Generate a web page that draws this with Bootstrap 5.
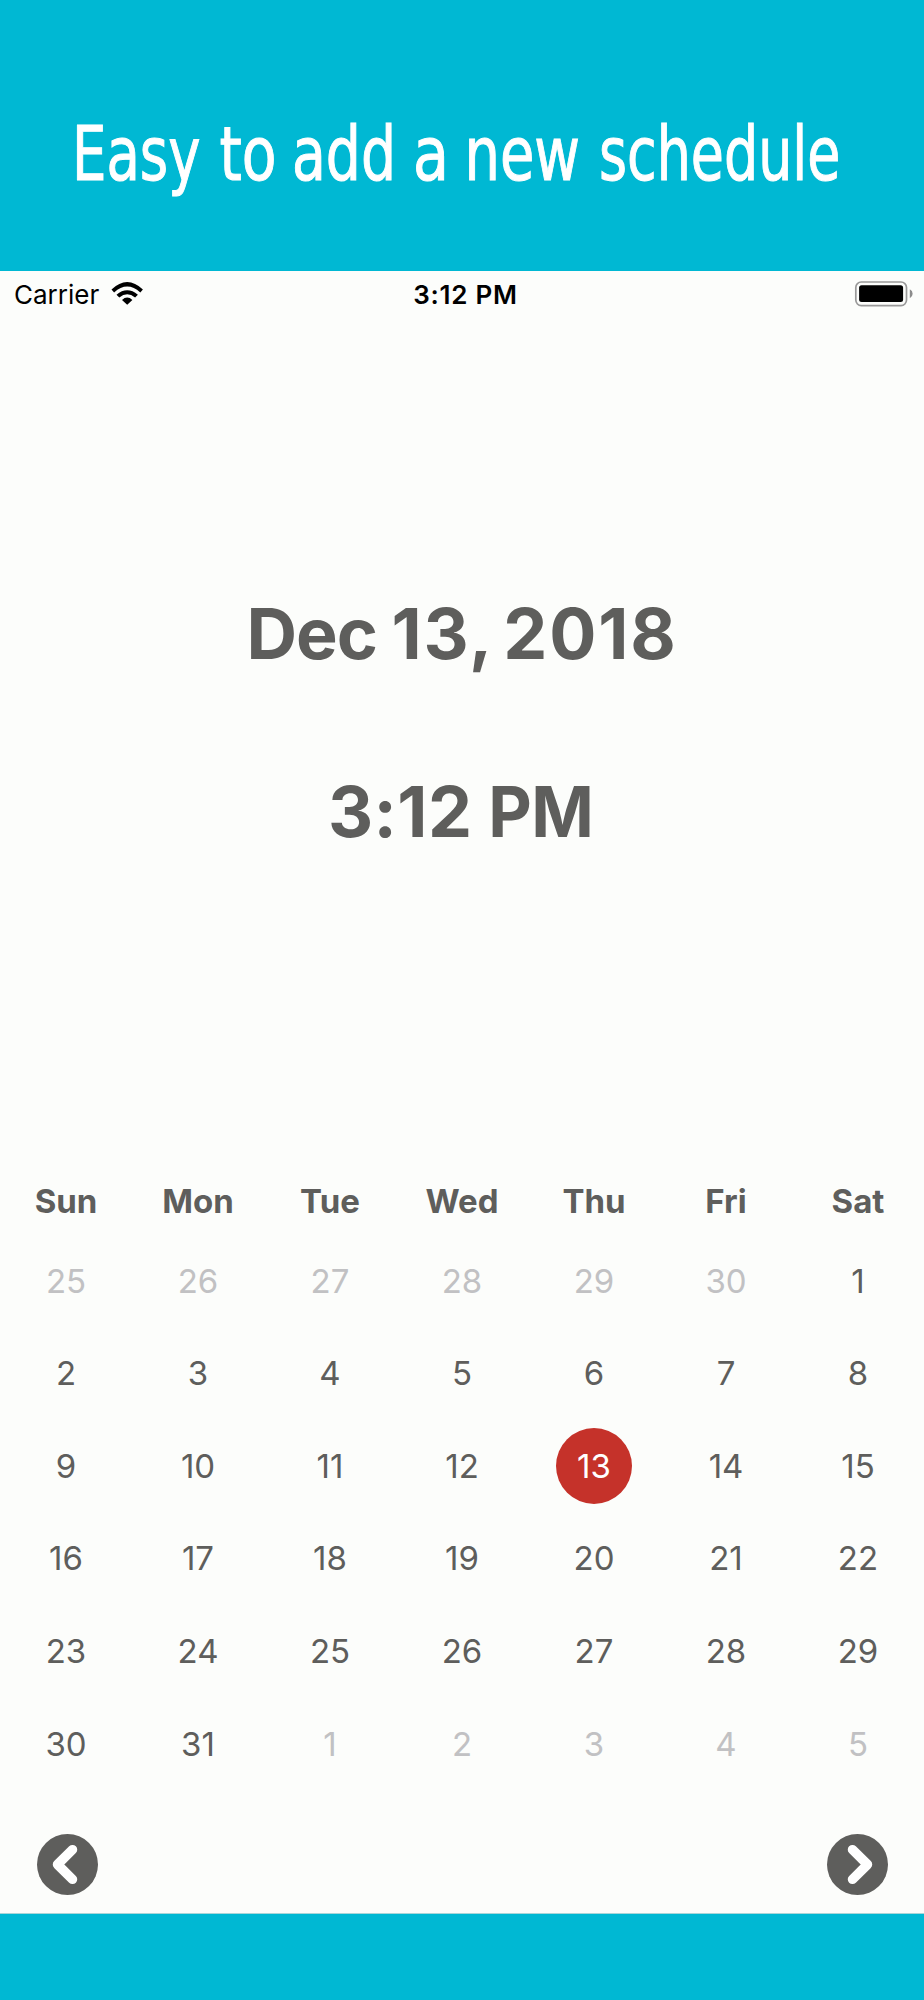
<!DOCTYPE html>
<html lang="en">
<head>
<meta charset="utf-8">
<meta name="viewport" content="width=device-width, initial-scale=1">
<title>Schedule</title>
<link href="https://cdn.jsdelivr.net/npm/bootstrap@5.3.0/dist/css/bootstrap.min.css" rel="stylesheet">
<style>
body{font-family:Inter,"Liberation Sans",sans-serif;background:#fcfdfb;color:#5e5e5c;height:2000px}
.promo{background:#00b8d3;height:271px}
.promo svg{display:block;overflow:visible}
.promo text{font-family:"DejaVu Sans Condensed","DejaVu Sans",sans-serif;font-size:74.5px;font-stretch:condensed;stroke:#fff;stroke-width:1px}
.status{height:46px;color:#000;font-size:26px;padding:0 11px 0 14px}
.status .clock{font-weight:600;letter-spacing:.75px;padding-left:4px}
.status>*{flex:1 1 0}
.status .battery{margin-right:-1.5px}
.picker{height:851px;font-size:70px;font-weight:700;line-height:84px;padding-top:275px;white-space:nowrap}
.digits{letter-spacing:1.8px;word-spacing:-7px}
.month{letter-spacing:-1px;margin-right:-2px}
.picker .time{margin-top:94px;letter-spacing:.4px;word-spacing:-3px}
.meridiem{display:inline-block;transform:scaleX(.96);transform-origin:center;letter-spacing:-.5px}
.calendar{font-size:33px}
.week{height:92.6px}
.week.names{height:67px;font-weight:700}
.other{color:#c1c1c3}
.today{width:76px;height:76px;background:#c5322a;color:#fff}
.pager{padding:43.5px 36.5px 18px}
.pager .btn{line-height:0}
.footer-bar{background:#00b8d3;flex:1;border-top:1px solid #a9d5d8}
</style>
</head>
<body class="d-flex flex-column m-0">
<header class="promo flex-shrink-0">
<svg width="924" height="271"><text y="180" fill="#fff"><tspan x="72" textLength="128.500" lengthAdjust="spacingAndGlyphs">Easy</tspan> <tspan x="219.500" textLength="57" lengthAdjust="spacingAndGlyphs">to</tspan> <tspan x="292" textLength="104" lengthAdjust="spacingAndGlyphs">add</tspan> <tspan x="413" textLength="36" lengthAdjust="spacingAndGlyphs">a</tspan> <tspan x="464.500" textLength="115.500" lengthAdjust="spacingAndGlyphs">new</tspan> <tspan x="599" textLength="241.500" lengthAdjust="spacingAndGlyphs">schedule</tspan></text></svg>
</header>
<div class="status d-flex align-items-center flex-shrink-0">
  <div class="d-flex align-items-center"><span class="carrier">Carrier</span>
    <svg class="ms-2" width="40" height="24" viewBox="-4.500 0 40 24"><path d="M0 7.500Q15.700-7.500 31.400 7.500L28.800 10.400Q15.700-1.200 2.600 10.400ZM5 12.700Q15.700 3.800 26.400 12.700L23.600 15.600Q15.700 8.700 7.800 15.600ZM10.500 17.900Q15.700 13.300 20.900 17.900L15.700 22.800Z"/></svg>
  </div>
  <div class="clock text-center">3:12 PM</div>
  <div class="d-flex justify-content-end"><svg class="battery" width="60" height="26" viewBox="0 0 60 26"><rect x="1.800" y="1" width="50.700" height="23.600" rx="5.500" fill="none" stroke="#999" stroke-width="1.700"/><rect x="5.100" y="4.200" width="44" height="16.800" rx="2.500"/><path d="M55.800 8.200a5 5 0 0 1 0 9z" fill="#8c8c8c"/></svg></div>
</div>
<main class="flex-shrink-0">
  <section class="picker text-center"><div class="date"><span class="month">Dec</span> <span class="digits">13, 2018</span></div><div class="time">3:12 <span class="meridiem">PM</span></div></section>
  <section class="calendar text-center" id="calendar"></section>
  <nav class="pager d-flex justify-content-between">
    <button class="btn border-0 p-0" aria-label="Previous month"><svg width="61" height="61" viewBox="0 0 61 61"><circle cx="30.500" cy="30.500" r="30.500" fill="#5e5e5c"/><path d="M35.500 15.700L20.500 30.500L35.500 45.300" fill="none" stroke="#fff" stroke-width="9.500" stroke-linecap="round" stroke-linejoin="round"/></svg></button>
    <button class="btn border-0 p-0" aria-label="Next month"><svg width="61" height="61" viewBox="0 0 61 61"><circle cx="30.500" cy="30.500" r="30.500" fill="#5e5e5c"/><path d="M25.500 15.700L40.500 30.500L25.500 45.300" fill="none" stroke="#fff" stroke-width="9.500" stroke-linecap="round" stroke-linejoin="round"/></svg></button>
  </nav>
</main>
<footer class="footer-bar"></footer>
<script src="https://cdn.jsdelivr.net/npm/bootstrap@5.3.0/dist/js/bootstrap.bundle.min.js"></script>
<script>
const names=['Sun','Mon','Tue','Wed','Thu','Fri','Sat'];
let html='<div class="week names row g-0 align-items-center">'+names.map(n=>`<div class="col">${n}</div>`).join('')+'</div>';
for(let w=0;w<6;w++){
  html+='<div class="week row g-0 align-items-center">';
  for(let d=0;d<7;d++){
    const day=new Date(2018,10,25+w*7+d), n=day.getDate(), inMonth=day.getMonth()===11;
    const label=inMonth&&n===13?`<span class="today rounded-circle d-inline-flex align-items-center justify-content-center">${n}</span>`:n;
    html+=`<div class="col${inMonth?'':' other'}">${label}</div>`;
  }
  html+='</div>';
}
document.getElementById('calendar').innerHTML=html;
</script>
</body>
</html>
